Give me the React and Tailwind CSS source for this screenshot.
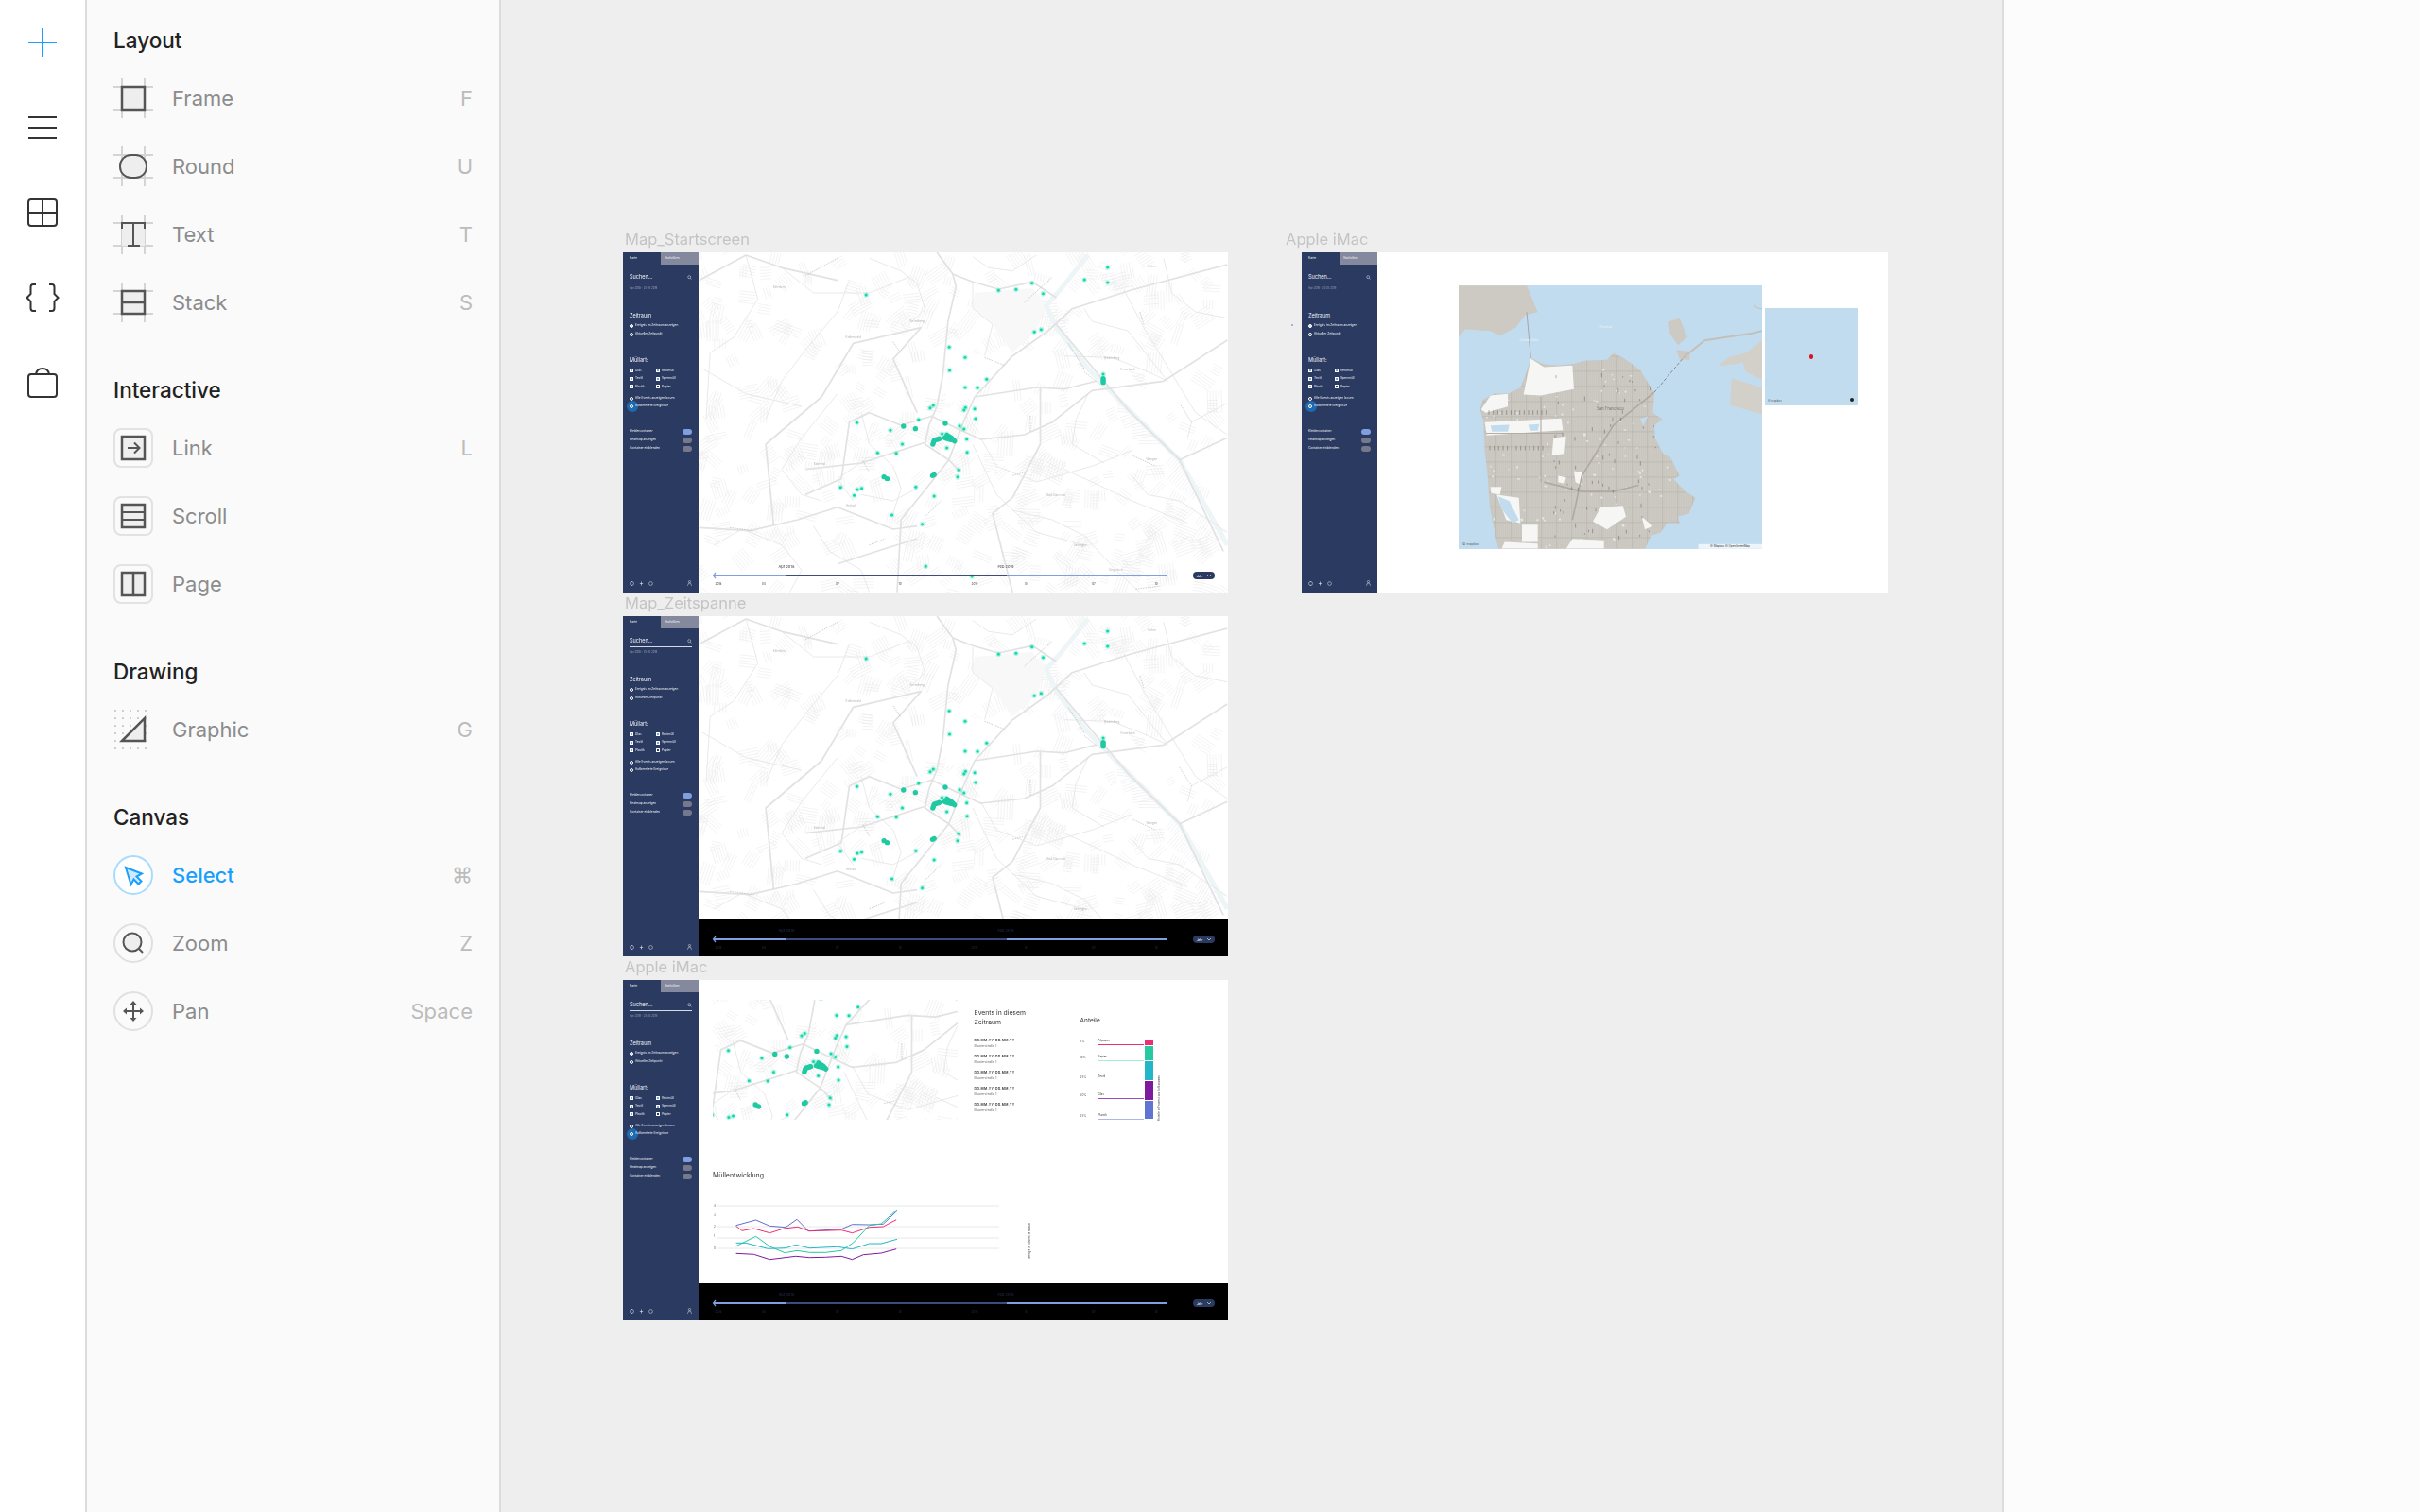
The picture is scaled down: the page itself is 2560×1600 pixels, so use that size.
import React from 'react';

// map coordinates below were read off a 2.376x / 3x crop, z() brings them back to artboard pixels
const z = ([x, y]) => [(x - 211) / 2.376, (y - 111) / 3];
const line = (pts) => pts.map((p, i) => { const [x, y] = z(p); return `${i ? 'L' : 'M'}${x.toFixed(1)} ${y.toFixed(1)}`; }).join(' ');

const dots = [[632,246],[965,232],[1009,229],[1049,209],[1077,242],[1181,198],[1239,159],[1239,207],[1055,364],[1072,356],[841,412],[881,445],[842,486],[935,514],[881,540],[912,541],[801,597],[793,605],[882,604],[878,612],[905,608],[907,639],[764,642],[609,652],[693,676],[867,662],[878,672],[823,687],[834,688],[885,704],[723,720],[835,732],[661,748],[708,749],[886,746],[865,802],[862,824],[568,857],[610,864],[621,860],[602,883],[757,856],[803,885],[697,945],[773,974],[782,1108],[898,1140],[1228,498]];
const bigDots = [[726,663],[756,671],[831,654],[799,820],[803,817],[677,824],[685,830],[1228,512],[1228,518],[1228,524]];
const blobs = [[[800,720],[803,708],[816,703]],[[836,692],[846,700],[854,710]],[[830,700],[846,706]]];

const majorRoads = [
  [[810,111],[850,180],[858,220],[838,330],[825,500],[810,600],[790,660],[780,720],[840,770],[870,810]],
  [[850,180],[900,205],[965,228],[1050,205],[1110,255]],
  [[1540,150],[1300,230],[1150,290],[1090,360],[1000,440],[905,570],[880,640],[840,770],[790,850],[720,960],[710,1190]],
  [[795,630],[860,670],[920,705],[1030,690],[1100,650],[1200,550],[1380,520],[1540,390]],
  [[1110,340],[1290,610],[1420,770],[1530,1060]],
  [[480,800],[620,780],[780,715]],
  [[212,985],[340,995],[460,960],[560,920],[700,990],[760,980]],
  [[800,630],[720,660],[640,620],[590,650],[570,830],[480,880]],
  [[760,620],[700,450],[770,350],[600,400],[520,570],[380,720],[400,980]],
  [[905,570],[1060,540],[1130,545],[1210,520]],
  [[1070,540],[1070,720],[1000,890],[950,940],[1000,1190]],
  [[212,200],[330,120],[420,160],[560,200]],
  [[1420,770],[1540,700]],
  [[560,1100],[660,1060],[760,1020]],
];
const smallRoads = [
  [[590,200],[560,300],[480,420],[420,520],[380,640]],
  [[900,210],[900,290],[950,340],[930,440]],
  [[620,620],[640,720],[700,790],[720,860],[700,940]],
  [[640,760],[560,830],[600,900]],
  [[1180,290],[1200,330],[1290,360],[1340,440],[1390,520]],
  [[1280,230],[1330,350],[1460,620],[1540,690]],
  [[1130,440],[1250,445],[1340,490],[1390,520]],
  [[1130,800],[1200,840],[1300,900],[1440,970]],
  [[220,480],[330,560],[470,600]],
  [[900,720],[960,880],[1060,1000],[1180,1040]],
  [[620,880],[700,900],[760,860]],
  [[1440,700],[1450,650],[1540,590]],
  [[330,120],[360,260],[300,380],[240,430],[230,640]],
  [[420,160],[500,240],[640,240],[740,190]],
  [[560,560],[470,700],[420,800],[470,880],[520,900]],
  [[250,1040],[320,990],[420,1040],[470,1120],[440,1190]],
  [[500,980],[540,1060],[620,1120],[640,1190]],
  [[1000,930],[1100,960],[1180,1010],[1260,1120],[1320,1190]],
  [[920,700],[960,790],[1060,840],[1200,790],[1300,740]],
  [[1190,560],[1160,640],[1150,720],[1230,780]],
  [[1300,820],[1340,880],[1420,900],[1540,1000]],
  [[1060,120],[1000,170],[940,160],[900,125]],
  [[640,130],[720,170],[760,210],[780,290],[740,340]],
  [[1380,130],[1400,240],[1460,300],[1540,320]],
];
// the clean strips along the river and the inner city that carry no side streets
const clearings = [
  [[1115,350],[1185,440],[1280,470],[1390,640],[1420,750],[1290,600],[1190,480]],
  [[850,420],[930,440],[990,440],[905,570],[830,590]],
  [[905,240],[1050,225],[1085,280],[1060,360],[1000,430],[950,340],[900,290]],
];
const ticks = [[[700,395],[718,430]],[[1030,270],[1100,190]],[[625,775],[640,810]],[[1140,400],[1180,480]],[[930,445],[980,470]],[[1300,755],[1360,790]],[[1180,490],[1220,530]],[[780,950],[820,900]],[[640,1040],[680,1020]],[[1320,300],[1330,340]],[[1420,590],[1450,650]],[[1045,630],[1045,680]],[[1310,1180],[1370,1170]],[[480,185],[560,130]],[[290,985],[350,995]],[[1000,820],[1030,810]]];
const placeNames = [['Rosenberg',760,333],['Kräherwald',600,383],['Feuerbach',1290,485],['Bad Cannstatt',1110,885],['Vaihingen',1170,1045],['Heslach',595,918],['Kaltental',515,787],['Wangen',1350,772],['Degerloch',1260,1122],['Hofen',1350,160],['Killesberg',415,225],['Riedenberg',1250,450]];

// fixed seed so the side streets are the same on every render
let seed = 7;
const rnd = () => { seed = (seed * 16807) % 2147483647; return seed / 2147483647; };
const buildStreets = (count, spread) => {
  let d = '';
  for (let i = 0; i < count; i++) {
    const cx = rnd() * 560, cy = rnd() * 360, a = rnd() * Math.PI, n = 3 + Math.floor(rnd() * 4);
    const len = spread * (0.5 + rnd());
    for (let k = 0; k < n; k++) {
      const ox = cx + Math.cos(a + 1.57) * k * 3, oy = cy + Math.sin(a + 1.57) * k * 3;
      d += `M${(ox - Math.cos(a) * len).toFixed(1)} ${(oy - Math.sin(a) * len).toFixed(1)}L${(ox + Math.cos(a) * len).toFixed(1)} ${(oy + Math.sin(a) * len).toFixed(1)}`;
    }
  }
  return d;
};
const minorStreets = buildStreets(430, 8);

function StreetMap({ viewBox = '0 0 560 360', width = 560, height = 360 }) {
  const [vx, vy, vw, vh] = viewBox.split(' ').map(Number);
  // a cropped view only keeps the names that fit inside it
  const visibleNames = placeNames.filter(([, x, y]) => {
    const [px, py] = z([x, y]);
    return px > vx + 12 && px < vx + vw - 12 && py > vy + 4 && py < vy + vh - 2;
  });
  return (
    <svg width={width} height={height} viewBox={viewBox} className="block bg-white">
      <path d={minorStreets} stroke="#e7e7e7" strokeWidth="0.5" fill="none" />
      {clearings.map((c, i) => <path key={i} d={`${line(c)}Z`} fill={i === 2 ? '#f8f8f8' : '#ffffff'} />)}
      <path d={line([[1190,120],[1120,230],[1085,280],[1110,350],[1190,480],[1300,620],[1420,770],[1540,1040]])} stroke="#edf5f6" strokeWidth="5" fill="none" />
      {smallRoads.map((r, i) => <path key={i} d={line(r)} stroke="#e6e6e6" strokeWidth="0.9" fill="none" />)}
      {majorRoads.map((r, i) => <path key={i} d={line(r)} stroke="#e2e2e2" strokeWidth="1.7" fill="none" strokeLinejoin="round" />)}
      {ticks.map((r, i) => <path key={i} d={line(r)} stroke="#a0a0a0" strokeWidth="0.5" strokeDasharray="1.5 1" fill="none" />)}
      {visibleNames.map(([name, x, y]) => {
        const [px, py] = z([x, y]);
        return <text key={name} x={px} y={py} fontSize="3" fill="#b4b4b4" textAnchor="middle" fontFamily="Inter, sans-serif">{name}</text>;
      })}
      {dots.map((p, i) => {
        const [x, y] = z(p);
        return <g key={i}><circle cx={x} cy={y} r="2.8" fill="#1fe0b4" opacity="0.28" /><circle cx={x} cy={y} r="1.5" fill="#12d8aa" /></g>;
      })}
      {bigDots.map((p, i) => {
        const [x, y] = z(p);
        return <circle key={i} cx={x} cy={y} r="2.7" fill="#1fc9a2" />;
      })}
      {blobs.map((b, i) => <path key={i} d={line(b)} stroke="#1fc9a2" strokeWidth="5.4" strokeLinecap="round" strokeLinejoin="round" fill="none" />)}
    </svg>
  );
}

function TimeBar({ dark }) {
  const textFill = dark ? '#26314f' : '#333333';
  const stamps = [[21,'2018'],[69,'04'],[147,'07'],[213,'10'],[292,'2019'],[347,'04'],[418,'07'],[484,'10']];
  return (
    <div className={`absolute bottom-0 left-0 h-[39px] w-full ${dark ? 'bg-black' : ''}`}>
      <svg width="560" height="39" className="block" fontFamily="Inter, sans-serif">
        <text x="93" y="12.5" fontSize="4" fill={textFill} textAnchor="middle">Apr 2018</text>
        <text x="325" y="12.5" fontSize="4" fill={textFill} textAnchor="middle">Feb 2019</text>
        <rect x="16" y="20" width="479" height="2" fill="#7f9fe0" />
        <rect x="93" y="20" width="233" height="2" fill="#3d4c7e" />
        <path d="M18 18 L15.5 21 L18 24" stroke="#7f9fe0" strokeWidth="1.2" fill="none" />
        {stamps.map(([x, t]) => <text key={x} x={x} y="30.5" fontSize="3" fill={textFill} textAnchor="middle">{t}</text>)}
        <rect x="523" y="17" width="23" height="8" rx="4" fill="#2b3a60" />
        <text x="530" y="22.5" fontSize="3.2" fill="#ffffff" textAnchor="middle">Jahr</text>
        <path d="M538 20 L540 22 L542 20" stroke="#ffffff" strokeWidth="0.6" fill="none" />
      </svg>
    </div>
  );
}

function Radio({ on, glow, children }) {
  return (
    <div className="relative flex h-[8px] items-center gap-[2px] whitespace-nowrap">
      {glow && <span className="absolute left-[-3.5px] top-[-2px] size-[12px] rounded-full bg-[#1f69b0]" />}
      <span className={`relative size-[4px] shrink-0 rounded-full border-[0.5px] border-white ${on ? 'bg-[#c9d6f0]' : ''}`} />
      <span className="relative">{children}</span>
    </div>
  );
}

function Check({ on = true, children }) {
  return (
    <div className="flex h-[8.5px] items-center gap-[2px]">
      <span className={`size-[4px] shrink-0 rounded-[0.5px] border-[0.4px] border-white ${on ? 'bg-[#7f9fe0]' : ''}`} />
      <span>{children}</span>
    </div>
  );
}

function Toggle({ on, children }) {
  return (
    <div className="flex h-[9px] items-center justify-between">
      <span>{children}</span>
      <span className={`h-[5.5px] w-[10px] rounded-full ${on ? 'bg-[#7f9fe0]' : 'bg-[#76798c]'}`} />
    </div>
  );
}

function Sidebar({ glow = true, firstOn = true }) {
  return (
    <div className="flex h-full w-[80px] shrink-0 flex-col bg-[#2b3a60] text-[3.2px] leading-none text-[#f2f4f8]">
      <div className="flex h-[12.5px]">
        <div className="flex w-[40px] items-center pl-[7px]">Karte</div>
        <div className="flex w-[40px] items-center bg-[#85899e] pl-[4px]">Statistiken</div>
      </div>
      <div className="mx-[7px] mt-[8.5px] flex h-[12px] items-center justify-between border-b-[0.8px] border-[#d5d9e4] text-[5.5px]">
        <span>Suchen...</span>
        <svg width="5" height="5" viewBox="0 0 5 5" fill="none" stroke="#e8ebf2" strokeWidth="0.5"><circle cx="2.2" cy="2.2" r="1.5" /><path d="M3.3 3.3 L4.5 4.5" /></svg>
      </div>
      <div className="mx-[7px] mt-[3px] h-[4px] text-[2.8px] leading-[4px] text-[#9aa3ba]">Apr 2018 - 25.05.2019</div>
      <div className="mx-[7px] mt-[24px] flex h-[8px] items-center text-[5.5px]">Zeitraum</div>
      <div className="mx-[7px] mt-[2px] flex flex-col gap-[1px]">
        <Radio on={firstOn}>Ereignis im Zeitraum anzeigen</Radio>
        <Radio>Aktueller Zeitpunkt</Radio>
      </div>
      <div className="mx-[7px] mt-[20px] flex h-[8px] items-center text-[5.5px]">Müllart:</div>
      <div className="mx-[7px] mt-[2px] grid grid-cols-[28px_1fr]">
        <Check>Glas</Check><Check>Restmüll</Check>
        <Check>Textil</Check><Check>Sperrmüll</Check>
        <Check>Plastik</Check><Check on={false}>Papier</Check>
      </div>
      <div className="mx-[7px] mt-[4.5px] flex flex-col">
        <Radio>Alle Events anzeigen lassen</Radio>
        <Radio glow={glow}>Aufbereitete Ereignisse</Radio>
      </div>
      <div className="mx-[7px] mt-[18.5px] flex flex-col">
        <Toggle on>Kleidercontainer</Toggle>
        <Toggle>Heatmap anzeigen</Toggle>
        <Toggle>Container einblenden</Toggle>
      </div>
      <div className="mx-[7px] mb-[6px] mt-auto flex h-[8px] items-center justify-between">
        <div className="flex items-center gap-[5px]">
          <svg width="5" height="5" viewBox="0 0 5 5" fill="none" stroke="#e8ebf2" strokeWidth="0.5"><path d="M0.5 2.5 A2 2 0 0 1 4.5 2.5 A2 2 0 0 1 0.5 2.5 M2.5 0 V1.2 M2.5 3.8 V5" /></svg>
          <svg width="5" height="5" viewBox="0 0 5 5" stroke="#e8ebf2" strokeWidth="0.6"><path d="M2.5 0.5 V4.5 M0.8 2.5 H4.2" /></svg>
          <svg width="5" height="5" viewBox="0 0 5 5" fill="none" stroke="#e8ebf2" strokeWidth="0.5"><circle cx="2.5" cy="2.5" r="1.9" /></svg>
        </div>
        <svg width="5" height="6" viewBox="0 0 5 6" fill="none" stroke="#e8ebf2" strokeWidth="0.5"><circle cx="2.5" cy="1.5" r="1.1" /><path d="M0.4 5.8 L1.6 3 H3.4 L4.6 5.8" /></svg>
      </div>
    </div>
  );
}

function Artboard({ title, className, labelClass = 'left-[2px]', children }) {
  return (
    <div className={`absolute h-[360px] bg-white ${className}`}>
      <div className={`absolute top-[-24px] whitespace-nowrap text-[16.5px] leading-[20px] text-[#c4c4c4] blur-[0.4px] ${labelClass}`}>{title}</div>
      <div className="flex h-full blur-[0.2px]">{children}</div>
    </div>
  );
}

const shares = [
  { pct: '5%', name: 'Altpapier', color: '#ec2f72', line: '#ec2f72', row: 'h-[6px]', fill: 'h-[5px]' },
  { pct: '10%', name: 'Papier', color: '#26c9a0', line: '#a6ebd6', row: 'h-[17px]', fill: 'h-[15px]' },
  { pct: '25%', name: 'Textil', color: '#22b6c9', line: '#ffffff', row: 'h-[21px]', fill: 'h-[20px]' },
  { pct: '30%', name: 'Glas', color: '#7f1a9e', line: '#9a4db5', row: 'h-[19px]', fill: 'h-[20px]' },
  { pct: '25%', name: 'Plastik', color: '#6074d2', line: '#aeb8e8', row: 'h-[22px]', fill: 'h-[19px]' },
];

const series = [
  { color: '#5c70cf', pts: [[305,860],[355,843],[390,862],[430,866],[458,841],[487,878],[570,872],[597,857],[640,858],[675,856],[710,814]] },
  { color: '#ec2f72', pts: [[305,862],[320,877],[350,870],[390,884],[425,870],[460,865],[490,878],[570,875],[597,884],[640,866],[675,864],[708,842]] },
  { color: '#26c9a0', pts: [[305,926],[355,895],[390,927],[428,947],[458,940],[490,946],[530,946],[570,940],[600,915],[640,860],[670,855],[710,810]] },
  { color: '#22b6c9', pts: [[305,916],[330,916],[385,934],[430,932],[455,922],[490,932],[560,928],[597,935],[640,918],[670,918],[710,904]] },
  { color: '#7f1a9e', pts: [[305,949],[350,952],[390,968],[455,958],[490,962],[530,961],[570,958],[597,968],[625,953],[670,948],[708,935]] },
];
// same crop scale, but this chart's zero sits at y 81 of the crop rather than 111
const chartPath = (pts) => pts.map(([x, y], i) => `${i ? 'L' : 'M'}${((x - 211) / 2.376 - 15).toFixed(1)} ${((y - 81) / 3 - 232).toFixed(1)}`).join(' ');

function EventRow() {
  return (
    <div className="h-[17px] text-[3.4px] leading-[6px]">
      <div className="whitespace-nowrap font-semibold tracking-[0.35px] text-[#333]">DD.MM.YY-DD.MM.YY</div>
      <div className="text-[#666]">Musterstraße 1</div>
    </div>
  );
}

function StatsView() {
  return (
    <div className="relative flex-1 pl-[15px] pt-[21px] font-['Inter',sans-serif]">
      <div className="flex h-[127px]">
        <StreetMap viewBox="151 126.6 258.6 127" width={258.6} height={127} />
        <div className="ml-[18px] w-[112px] pt-[9px]">
          <div className="text-[6.8px] leading-[10px] text-[#333]">Events in diesem<br />Zeitraum</div>
          <div className="mt-[11px]">
            <EventRow /><EventRow /><EventRow /><EventRow /><EventRow />
          </div>
        </div>
        <div className="flex w-[85px] flex-col">
          <div className="mt-[17px] h-[10px] text-[6.5px] leading-[10px] text-[#333]">Anteile</div>
          <div className="mt-[15px] flex">
            <div className="w-[68px]">
              {shares.map((s) => (
                <div key={s.name} className={`flex items-end ${s.row}`}>
                  <span className="w-[19px] pb-[2px] text-[3px] leading-none text-[#555]">{s.pct}</span>
                  <span className="flex-1 border-b-[0.8px] pb-[2px] text-[3px] leading-none text-[#333]" style={{ borderColor: s.line }}>{s.name}</span>
                </div>
              ))}
            </div>
            <div className="ml-[1px] flex w-[8.5px] flex-col gap-[1px] pt-[1px]">
              {shares.map((s) => <div key={s.name} className={s.fill} style={{ backgroundColor: s.color }} />)}
            </div>
            <div className="ml-[5px] mb-[-1px] self-end whitespace-nowrap text-[3px] leading-none text-[#444] [writing-mode:vertical-rl] rotate-180">Anteile in Prozent am Aufkommen</div>
          </div>
        </div>
      </div>
      <div className="mt-[54px] h-[10px] text-[7px] leading-[10px] text-[#333]">Müllentwicklung</div>
      <div className="relative mt-[20px]">
        <svg width="340" height="70" className="block" fontFamily="Inter, sans-serif">
          {[7, 29, 41, 52].map((y) => <line key={y} x1="5" x2="303" y1={y} y2={y} stroke="#e2e2e2" strokeWidth="0.8" />)}
          {[[8,'4'],[18,'3'],[30,'2'],[40,'1'],[53,'0']].map(([y, t]) => <text key={y} x="1" y={y} fontSize="3" fill="#555">{t}</text>)}
          {series.map((s) => <path key={s.color} d={chartPath(s.pts)} stroke={s.color} strokeWidth="1" fill="none" />)}
        </svg>
        <div className="absolute left-[334px] top-[25px] whitespace-nowrap text-[3px] leading-none text-[#444] [writing-mode:vertical-rl] rotate-180">Menge in Tonnen je Monat</div>
      </div>
      <TimeBar dark />
    </div>
  );
}

// coordinates from the 3x crop of the San Francisco map
const sfPeninsula = 'M255 872L240 800L228 740L222 650L212 560L208 470L198 430L205 400L240 380L290 378L325 360L345 310L358 265L395 285L440 290L490 285L530 275L600 272L620 250L650 265L680 285L705 305L730 345L750 375L745 440L775 460L750 480L752 520L778 570L800 580L815 610L830 640L810 650L850 690L880 710L860 760L825 770L830 790L790 790L770 820L740 830L720 872Z';
const sfWhite = ['M212 470L455 458L460 495L218 512Z','M358 268L400 295L490 290L495 365L390 385L335 382Z','M200 430L230 385L285 380L285 420L215 440Z','M230 675L265 675L260 700L232 695Z','M250 700L320 710L325 790L280 780Z','M330 795L380 795L380 850L330 850Z','M275 850L380 855L380 872L265 872Z','M580 740L650 735L660 770L600 810L555 785Z','M490 840L590 845L590 872L470 872Z','M710 770L745 800L720 810Z','M495 625L525 630L520 670L500 660Z','M445 640L470 645L465 665L445 660Z','M430 520L470 515L465 570L425 575Z'];
const sfBlue = ['M255 705L290 720L320 780L300 790L265 745Z','M230 480L290 478L285 500L235 500Z','M350 478L385 476L380 497L355 497Z','M705 460L730 450L715 480Z'];
const buildGrid = (step) => {
  let d = '';
  for (let x = 200; x < 880; x += step) d += `M${x} 260V872`;
  for (let y = 260; y < 872; y += step) d += `M195 ${y}H880`;
  return d;
};
const buildSpecks = () => {
  let d = '';
  for (let i = 0; i < 110; i++) {
    const x = 215 + rnd() * 640, y = 285 + rnd() * 580;
    d += `M${x.toFixed(0)} ${y.toFixed(0)}h${(2 + rnd() * 8).toFixed(0)}v${(2 + rnd() * 5).toFixed(0)}h-6z`;
  }
  return d;
};
const buildDarkTicks = () => {
  let d = '';
  for (let x = 225; x < 420; x += 14) d += `M${x} 432v14M${x + 3} 545v14`;
  for (let i = 0; i < 70; i++) {
    const x = 430 + rnd() * 340, y = 300 + rnd() * 540;
    d += `M${x.toFixed(0)} ${y.toFixed(0)}v${(4 + rnd() * 10).toFixed(0)}`;
  }
  return d;
};
const sfGrid = buildGrid(6);
const sfBigGrid = buildGrid(48);
const sfSpecks = buildSpecks();
const sfTicks = buildDarkTicks();

function SanFranciscoMap() {
  return (
    <svg width="321" height="279" viewBox="129 36 963 836" className="block bg-[#c2dcef]" fontFamily="Inter, sans-serif">
      <defs><clipPath id="sf-land"><path d={sfPeninsula} /></clipPath></defs>
      <path d="M129 36H345L380 120L340 130L310 170L260 195L230 180L150 175L129 200Z" fill="#cdcac3" />
      <path d="M795 150L830 140L855 200L825 225L800 190Z" fill="#cdcac3" />
      <path d="M820 240L862 245L862 272L830 270Z" fill="#cdcac3" />
      <path d="M950 292L990 262L1040 250L1092 210V335L1040 310L1030 280L1010 285Z" fill="#d3d0ca" />
      <path d="M995 330L1092 360V445L990 415Z" fill="#d3d0ca" />
      <path d={sfPeninsula} fill="#cfccc6" />
      <path d="M345 120L358 265" stroke="#a9a6a0" strokeWidth="3" fill="none" />
      <path d="M750 375L845 262" stroke="#77756f" strokeWidth="2.5" strokeDasharray="10 6" fill="none" />
      <path d="M845 262L910 210L1060 188L1092 180" stroke="#c4c0b9" strokeWidth="6" fill="none" />
      <path d="M1066 85Q1062 108 1092 110" stroke="#c4c0b9" strokeWidth="3" fill="none" />
      <g clipPath="url(#sf-land)">
        <path d={sfGrid} stroke="#c3bfb8" strokeWidth="0.8" />
        <path d={sfBigGrid} stroke="#b9b5ae" strokeWidth="2" />
        <path d={sfSpecks} fill="#e9e7e3" />
        {sfWhite.map((d) => <path key={d} d={d} fill="#f6f6f5" />)}
        {sfBlue.map((d) => <path key={d} d={d} fill="#c2dcef" />)}
        <path d="M400 660L520 690L620 690L700 670M750 375L620 480L520 640L490 780" stroke="#aeaaa3" strokeWidth="5" fill="none" />
        <path d="M215 505H460M390 390V660" stroke="#b2aea7" strokeWidth="3.5" fill="none" />
        <path d={sfTicks} stroke="#4d4c48" strokeWidth="1.3" />
      </g>
      <text x="610" y="433" fontSize="13" fill="#6f6d67" textAnchor="middle">San Francisco</text>
      <text x="596" y="172" fontSize="10" fill="#e8f2f9" textAnchor="middle">Alcatraz</text>
      <text x="352" y="212" fontSize="10" fill="#e8f2f9" textAnchor="middle">Golden Gate</text>
      <text x="168" y="862" fontSize="11" fill="#5f5f5f" textAnchor="middle">© mapbox</text>
      <rect x="890" y="857" width="202" height="15" fill="#ffffff" opacity="0.7" />
      <text x="990" y="868" fontSize="9" fill="#333333" textAnchor="middle">© Mapbox © OpenStreetMap</text>
    </svg>
  );
}

function MiniMap() {
  return (
    <div className="relative h-[103px] w-[98px] bg-[#c2dcef]">
      <span className="absolute left-[47px] top-[49px] h-[5px] w-[4px] rounded-full bg-[#e0101e]" />
      <span className="absolute bottom-[3px] left-[3px] text-[3px] leading-none text-[#5f5f5f]">© mapbox</span>
      <span className="absolute bottom-[4px] right-[4px] size-[4px] rounded-full bg-[#222]" />
    </div>
  );
}

function MapsView() {
  return (
    <div className="flex flex-1 items-start pl-[86px] pt-[35px]">
      <SanFranciscoMap />
      <div className="ml-[3px] mt-[24px]"><MiniMap /></div>
    </div>
  );
}

/* ---- panel icons, all on a 42 x 42 tile ---- */
const INK = '#555555';
const FILL = '#eeeeee';

function Guides() {
  return <path d="M9 0V42M33 0V42M0 9H42M0 33H42" stroke="#d4d4d4" strokeWidth="2" />;
}
const Tile = ({ children, className = '' }) => (
  <svg width="42" height="42" viewBox="0 0 42 42" fill="none" className={`block shrink-0 ${className}`}>{children}</svg>
);
const FrameIcon = () => <Tile><Guides /><rect x="9" y="9" width="24" height="24" fill={FILL} stroke={INK} strokeWidth="2.5" /></Tile>;
const RoundIcon = () => <Tile><Guides /><rect x="7" y="9" width="28" height="24" rx="11.5" fill={FILL} stroke={INK} strokeWidth="2" /></Tile>;
const TextIcon = () => <Tile><Guides /><rect x="9" y="9" width="24" height="24" fill={FILL} /><path d="M9 15V9H33V15M21 9V32M15 33H28" stroke={INK} strokeWidth="2" /></Tile>;
const StackIcon = () => <Tile><Guides /><rect x="9" y="9" width="24" height="24" fill={FILL} stroke={INK} strokeWidth="2.5" /><path d="M9 21H33" stroke={INK} strokeWidth="2.5" /></Tile>;
const Boxed = ({ children }) => <Tile><rect x="1" y="1" width="40" height="40" rx="7" stroke="#e2e2e2" strokeWidth="2" /><rect x="9" y="9" width="24" height="24" fill={FILL} stroke={INK} strokeWidth="2.5" />{children}</Tile>;
const LinkIcon = () => <Boxed><path d="M15 21H27M22 15.5L27.5 21L22 26.5" stroke={INK} strokeWidth="2" /></Boxed>;
const ScrollIcon = () => <Boxed><path d="M9 17H33M9 25H33" stroke={INK} strokeWidth="2" /></Boxed>;
const PageIcon = () => <Boxed><path d="M21 9V33" stroke={INK} strokeWidth="2.5" /></Boxed>;
const GraphicIcon = () => (
  <Tile>
    <path d="M1 1H41M1 9H41M1 17H41M1 25H41M1 33H41M1 41H41" stroke="#cfcfcf" strokeWidth="2" strokeDasharray="2 6" />
    <path d="M9 33L33 9V33Z" fill={FILL} stroke={INK} strokeWidth="2.5" />
  </Tile>
);
const SelectIcon = () => (
  <Tile>
    <circle cx="21" cy="21" r="20" fill="#ffffff" stroke="#a8dcff" strokeWidth="2" />
    <path d="M13 13L30 19.5L24.5 22.5L29.5 27.5L26.5 30.5L21.5 25.5L18.5 31Z" fill="#cfeaff" stroke="#1a9fff" strokeWidth="2" strokeLinejoin="miter" />
  </Tile>
);
const ZoomIcon = () => (
  <Tile>
    <circle cx="21" cy="21" r="20" stroke="#e0e0e0" strokeWidth="2" />
    <circle cx="20" cy="20" r="9.5" fill={FILL} stroke={INK} strokeWidth="2" />
    <path d="M27 27L31 31" stroke={INK} strokeWidth="2" />
  </Tile>
);
const PanIcon = () => (
  <Tile>
    <circle cx="21" cy="21" r="20" stroke="#e0e0e0" strokeWidth="2" />
    <path d="M21 12V30M12 21H30" stroke={INK} strokeWidth="2" />
    <path d="M21 10L17.5 14H24.5ZM21 32L17.5 28H24.5ZM10 21L14 17.5V24.5ZM32 21L28 17.5V24.5Z" fill={INK} />
  </Tile>
);

function ToolRow({ icon: Icon, label, shortcut, active }) {
  return (
    <div className="flex h-[72px] items-center">
      <Icon />
      <span className={`ml-[20px] flex-1 pt-[1px] text-[22px] ${active ? 'font-medium text-[#1a9fff]' : 'text-[#8c8c8c]'}`}>{label}</span>
      <span className="pt-[1px] text-[22px] text-[#bcbcbc]">{shortcut}</span>
    </div>
  );
}

function Section({ title, className = '', children }) {
  return (
    <section className={className}>
      <h3 className="mb-[8px] flex h-[36px] items-center pt-[1px] text-[22.5px] font-medium text-[#222]">{title}</h3>
      {children}
    </section>
  );
}

function ToolPanel() {
  return (
    <aside className="w-[438px] shrink-0 border-r-2 border-[#dcdcdc] bg-[#fafafa] pl-[28px] pr-[28px] pt-[24px]">
      <Section title="Layout">
        <ToolRow icon={FrameIcon} label="Frame" shortcut="F" />
        <ToolRow icon={RoundIcon} label="Round" shortcut="U" />
        <ToolRow icon={TextIcon} label="Text" shortcut="T" />
        <ToolRow icon={StackIcon} label="Stack" shortcut="S" />
      </Section>
      <Section title="Interactive" className="mt-[38px]">
        <ToolRow icon={LinkIcon} label="Link" shortcut="L" />
        <ToolRow icon={ScrollIcon} label="Scroll" />
        <ToolRow icon={PageIcon} label="Page" />
      </Section>
      <Section title="Drawing" className="mt-[38px]">
        <ToolRow icon={GraphicIcon} label="Graphic" shortcut="G" />
      </Section>
      <Section title="Canvas" className="mt-[38px]">
        <ToolRow icon={SelectIcon} label="Select" shortcut="⌘" active />
        <ToolRow icon={ZoomIcon} label="Zoom" shortcut="Z" />
        <ToolRow icon={PanIcon} label="Pan" shortcut="Space" />
      </Section>
    </aside>
  );
}

function RailButton({ children }) {
  return <div className="flex h-[90px] items-center justify-center">{children}</div>;
}

function IconRail() {
  const stroke = { fill: 'none', stroke: '#333333', strokeWidth: 2 };
  return (
    <nav className="w-[92px] shrink-0 border-r-2 border-[#dcdcdc] bg-white">
      <RailButton><svg width="32" height="32" viewBox="0 0 32 32"><path d="M16 1V31M1 16H31" stroke="#1a9fff" strokeWidth="2" /></svg></RailButton>
      <RailButton><svg width="32" height="32" viewBox="0 0 32 32" {...stroke}><path d="M1 5H31M1 16H31M1 27H31" /></svg></RailButton>
      <RailButton><svg width="32" height="32" viewBox="0 0 32 32" {...stroke}><rect x="1" y="2" width="30" height="28" rx="3" /><path d="M16 2V30M1 16H31" /></svg></RailButton>
      <RailButton><svg width="36" height="32" viewBox="0 0 36 32" {...stroke}><path d="M11 2H8Q5.5 2 5.5 5V12L1.5 16L5.5 20V27Q5.5 30 8 30H11M25 2H28Q30.5 2 30.5 5V12L34.5 16L30.5 20V27Q30.5 30 28 30H25" /></svg></RailButton>
      <RailButton><svg width="32" height="32" viewBox="0 0 32 32" {...stroke}><rect x="1" y="7" width="30" height="24" rx="3" /><path d="M9 7Q10 1 16 1Q22 1 23 7" /></svg></RailButton>
    </nav>
  );
}

export default function App() {
  return (
    <div className="flex h-[1600px] w-[2560px] overflow-hidden bg-white font-['Inter',sans-serif]">
      <IconRail />
      <ToolPanel />
      <main className="relative w-[1590px] shrink-0 border-r-2 border-[#dcdcdc] bg-[#eeeeee]">
        <Artboard title="Map_Startscreen" className="left-[129px] top-[267px] w-[640px]">
          <Sidebar />
          <div className="relative flex-1"><StreetMap /><TimeBar /></div>
        </Artboard>
        <Artboard title="Map_Zeitspanne" className="left-[129px] top-[652px] w-[640px]">
          <Sidebar glow={false} firstOn={false} />
          <div className="relative flex-1"><StreetMap /><TimeBar dark /></div>
        </Artboard>
        <Artboard title="Apple iMac" className="left-[129px] top-[1037px] w-[640px]">
          <Sidebar />
          <StatsView />
        </Artboard>
        <Artboard title="Apple iMac" className="left-[847px] top-[267px] w-[620px]" labelClass="left-[-17px]">
          <Sidebar />
          <MapsView />
          <span className="absolute left-[-11px] top-[76px] size-[2px] rounded-full bg-[#7f9fe0]" />
        </Artboard>
      </main>
      <div className="flex-1 bg-[#fcfcfc]" />
    </div>
  );
}
